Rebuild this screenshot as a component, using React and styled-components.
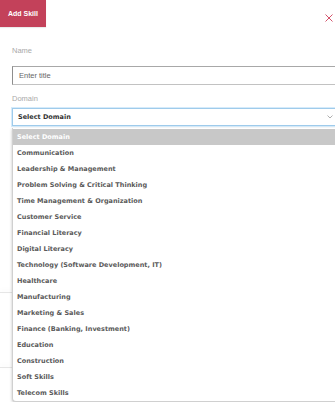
import React from "react";
import styled, { createGlobalStyle } from "styled-components";

const Global = createGlobalStyle`
  html, body { margin: 0; padding: 0; background: #fff; }
  body { width: 335px; height: 402px; overflow: hidden; font-family: "Liberation Sans", Arial, sans-serif; }
  * { box-sizing: border-box; }
`;

const Page = styled.div`
  position: relative;
  width: 335px;
  height: 402px;
  overflow: hidden;
`;

const Header = styled.div`
  display: flex;
  justify-content: space-between;
  align-items: flex-start;
  height: 27px;
`;

const AddButton = styled.div`
  height: 27px;
  padding: 0 8px;
  display: flex;
  align-items: center;
  background: #c3415a;
  color: #fff;
  font-weight: 700;
  font-size: 7px;
  box-shadow: 0 1px 1px rgba(0,0,0,0.08);
`;

const Close = styled.svg`
  margin: 13px 1px 0 0;
  width: 10px;
  height: 10px;
`;

const Form = styled.div`
  padding: 19px 0 0 12px;
  display: flex;
  flex-direction: column;
`;

const Label = styled.div`
  font-size: 7.5px;
  line-height: 10px;
  color: #a9a9a9;
  margin-bottom: ${p => p.$gap}px;
`;

const TextInput = styled.div`
  width: 330px;
  height: 19px;
  border: 1px solid #c2c2c2;
  border-left-color: #8e8e8e;
  border-top-color: #a8a8a8;
  padding-left: 6px;
  display: flex;
  align-items: center;
  font-size: 7.5px;
  color: #666;
  margin-bottom: 9px;
`;

const SelectWrap = styled.div`
  position: relative;
  width: 330px;
`;

const SelectBox = styled.div`
  height: 18px;
  border: 1px solid #9fcbeb;
  box-shadow: 0 0 0 1px #d6ebfa;
  padding: 0 7px 0 5px;
  display: flex;
  align-items: center;
  justify-content: space-between;
  font-family: "DejaVu Sans", sans-serif;
  font-weight: 700;
  font-size: 6.5px;
  color: #333;
`;

const Chevron = styled.svg`
  width: 6px;
  height: 4px;
  margin-right: 1px;
`;

const List = styled.div`
  position: absolute;
  top: 20px;
  left: 0;
  width: 326px;
  background: #fff;
  border: 1px solid #d0d0d0;
  border-top: none;
  border-radius: 0 0 4px 4px;
  box-shadow: 0 1px 3px rgba(0,0,0,0.25);
  display: flex;
  flex-direction: column;
  padding-top: 1px;
  z-index: 2;
`;

const Option = styled.div`
  height: 16px;
  display: flex;
  align-items: center;
  padding-left: 4px;
  font-family: "DejaVu Sans", sans-serif;
  font-weight: 700;
  font-size: 6.5px;
  color: ${p => (p.$active ? "#fff" : "#5a5a5a")};
  background: ${p => (p.$active ? "#c8c8c8" : "transparent")};
`;

const Under = styled.div`
  display: flex;
  flex-direction: column;
  padding-top: 166px;
`;

const Divider = styled.div`
  height: 1px;
  background: #e6e6e6;
  box-shadow: 0 -2px 4px rgba(0,0,0,0.06);
  margin-bottom: ${p => p.$gap}px;
`;

const options = [
  "Communication",
  "Leadership & Management",
  "Problem Solving & Critical Thinking",
  "Time Management & Organization",
  "Customer Service",
  "Financial Literacy",
  "Digital Literacy",
  "Technology (Software Development, IT)",
  "Healthcare",
  "Manufacturing",
  "Marketing & Sales",
  "Finance (Banking, Investment)",
  "Education",
  "Construction",
  "Soft Skills",
  "Telecom Skills",
];

export default function App() {
  return (
    <Page>
      <Global />
      <Header>
        <AddButton>Add Skill</AddButton>
        <Close viewBox="0 0 10 10">
          <path d="M1.5 1.5 L8.5 8.5 M8.5 1.5 L1.5 8.5" stroke="#d4546c" strokeWidth="1" fill="none" />
        </Close>
      </Header>
      <Form>
        <Label $gap={10}>Name</Label>
        <TextInput>Enter title</TextInput>
        <Label $gap={4}>Domain</Label>
        <SelectWrap>
          <SelectBox>
            <span>Select Domain</span>
            <Chevron viewBox="0 0 6 4">
              <path d="M0.5 0.5 L3 3 L5.5 0.5" stroke="#999" strokeWidth="0.8" fill="none" />
            </Chevron>
          </SelectBox>
          <List>
            <Option $active>Select Domain</Option>
            {options.map(o => (
              <Option key={o}>{o}</Option>
            ))}
          </List>
        </SelectWrap>
      </Form>
      <Under>
        <Divider $gap={74} />
        <Divider $gap={0} />
      </Under>
    </Page>
  );
}
